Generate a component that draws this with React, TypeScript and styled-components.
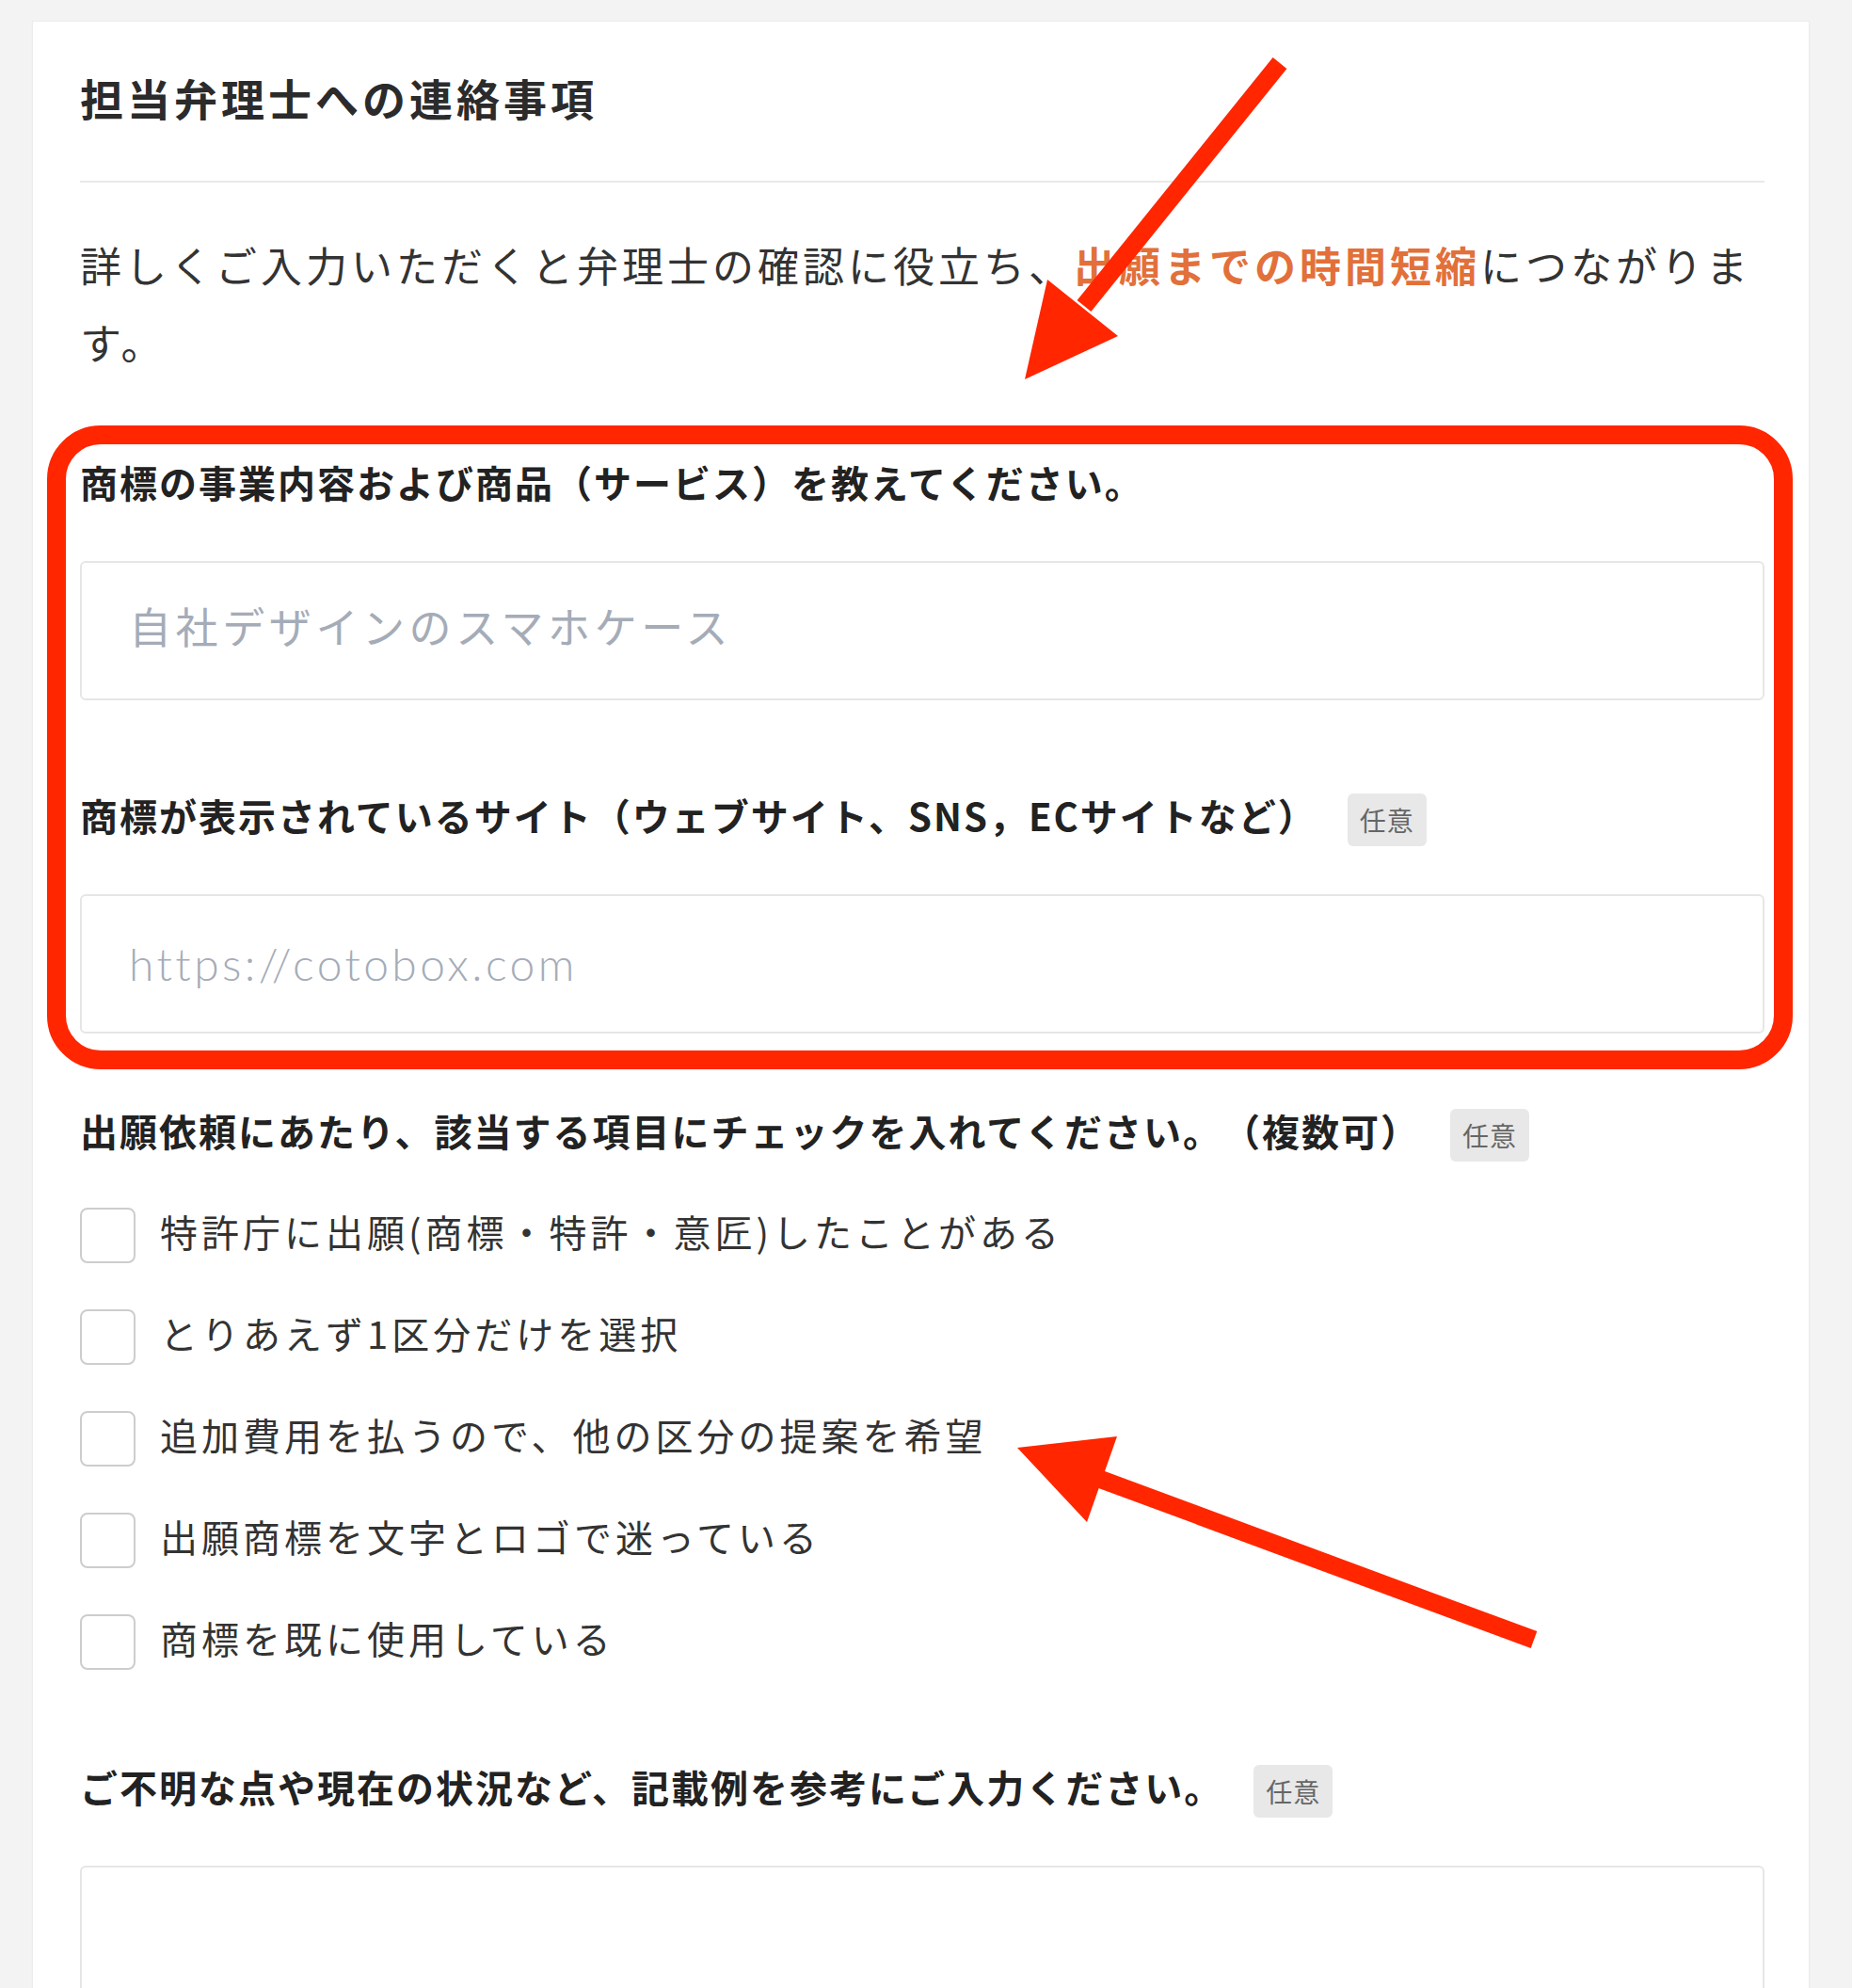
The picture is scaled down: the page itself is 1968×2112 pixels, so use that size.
import React from "react";
import styled, { createGlobalStyle } from "styled-components";

const GlobalStyle = createGlobalStyle`
  html, body {
    margin: 0;
    padding: 0;
    background: #f3f3f3;
    font-family: "Noto Sans CJK JP", "Noto Sans", sans-serif;
    color: #333;
    text-spacing-trim: space-all;
  }
  * {
    box-sizing: border-box;
  }
`;

const Page = styled.div`
  position: relative;
  width: 1968px;
  min-height: 2112px;
  padding: 23px 46px 0 35px;
  overflow: hidden;
`;

const Card = styled.section`
  background: #fff;
  box-shadow: 0 0 0 1px #ececec, 0 1px 3px rgba(0, 0, 0, 0.05);
  padding: 47px 47px 80px 50px;
`;

const Header = styled.header`
  padding-bottom: 52px;
  border-bottom: 2px solid #e9e9e9;
`;

const Title = styled.h1`
  margin: 0;
  font-size: 46px;
  line-height: 66px;
  font-weight: 700;
  letter-spacing: 4px;
  color: #2b2b2b;
  padding-bottom: 4px;
`;

const Lead = styled.p`
  margin: 46px 0 0;
  font-size: 44px;
  line-height: 82px;
  letter-spacing: 4px;
  color: #333;
`;

const Emphasis = styled.strong`
  color: #e2703a;
  font-weight: 700;
`;

const Field = styled.div<{ $top: number }>`
  margin-top: ${(p) => p.$top}px;
`;

const LabelRow = styled.div<{ $bottom?: number }>`
  display: flex;
  align-items: center;
  height: 60px;
  margin-bottom: ${(p) => p.$bottom ?? 54}px;
`;

const Label = styled.label`
  font-size: 40px;
  line-height: 60px;
  font-weight: 700;
  letter-spacing: 2px;
  color: #222;
  white-space: nowrap;
`;

const OptionalBadge = styled.span`
  margin: 10px 0 0 32px;
  height: 56px;
  padding: 0 13px;
  border-radius: 6px;
  background: #e8e8e8;
  color: #666;
  font-size: 28px;
  line-height: 56px;
  letter-spacing: 1px;
`;

const TextInput = styled.input<{ $latin?: boolean }>`
  display: block;
  width: 100%;
  height: 148px;
  padding: 0 0 ${(p) => (p.$latin ? 2 : 12)}px ${(p) => (p.$latin ? 50 : 50)}px;
  border: 2px solid #e6e6e6;
  border-radius: 6px;
  background: #fff;
  outline: none;
  font-family: ${(p) =>
    p.$latin ? `"Lato", "Noto Sans CJK JP", sans-serif` : `"Noto Sans CJK JP", sans-serif`};
  font-weight: ${(p) => (p.$latin ? 300 : 400)};
  font-size: ${(p) => (p.$latin ? 48 : 45)}px;
  letter-spacing: ${(p) => (p.$latin ? 3.4 : 4.6)}px;
  color: #333;

  &::placeholder {
    color: #a5acb8;
    opacity: 1;
  }
`;

const TextArea = styled.textarea`
  display: block;
  width: 100%;
  height: 300px;
  border: 2px solid #e6e6e6;
  border-radius: 6px;
  background: #fff;
  resize: none;
  outline: none;
`;

const CheckList = styled.ul`
  list-style: none;
  margin: 52px 0 0;
  padding: 0;
  display: flex;
  flex-direction: column;
  gap: 49px;
`;

const CheckRow = styled.li`
  display: flex;
  align-items: center;
  height: 59px;
  gap: 26px;
`;

const CheckBox = styled.span`
  flex: 0 0 59px;
  width: 59px;
  height: 59px;
  border: 2px solid #cdcdcd;
  border-radius: 8px;
  background: #fff;
`;

const CheckText = styled.span`
  font-size: 40px;
  line-height: 59px;
  letter-spacing: 4px;
  color: #333;
  white-space: nowrap;
  padding-bottom: 8px;
`;

const Annotations = styled.svg`
  position: absolute;
  left: 0;
  top: 0;
  width: 1968px;
  height: 2112px;
  pointer-events: none;
`;

const RED = "#ff2600";

const options = [
  "特許庁に出願(商標・特許・意匠)したことがある",
  "とりあえず1区分だけを選択",
  "追加費用を払うので、他の区分の提案を希望",
  "出願商標を文字とロゴで迷っている",
  "商標を既に使用している",
];

export default function App() {
  return (
    <Page>
      <GlobalStyle />
      <Card>
        <Header>
          <Title>担当弁理士への連絡事項</Title>
        </Header>

        <Lead>
          詳しくご入力いただくと弁理士の確認に役立ち、
          <Emphasis>出願までの時間短縮</Emphasis>につながります。
        </Lead>

        <Field $top={78}>
          <LabelRow>
            <Label>商標の事業内容および商品（サービス）を教えてください。</Label>
          </LabelRow>
          <TextInput placeholder="自社デザインのスマホケース" />
        </Field>

        <Field $top={92}>
          <LabelRow>
            <Label>商標が表示されているサイト（ウェブサイト、SNS，ECサイトなど）</Label>
            <OptionalBadge>任意</OptionalBadge>
          </LabelRow>
          <TextInput $latin placeholder="https://cotobox.com" />
        </Field>

        <Field $top={73}>
          <LabelRow $bottom={0}>
            <Label>出願依頼にあたり、該当する項目にチェックを入れてください。（複数可）</Label>
            <OptionalBadge>任意</OptionalBadge>
          </LabelRow>
          <CheckList>
            {options.map((o) => (
              <CheckRow key={o}>
                <CheckBox />
                <CheckText>{o}</CheckText>
              </CheckRow>
            ))}
          </CheckList>
        </Field>

        <Field $top={94}>
          <LabelRow>
            <Label>ご不明な点や現在の状況など、記載例を参考にご入力ください。</Label>
            <OptionalBadge>任意</OptionalBadge>
          </LabelRow>
          <TextArea />
        </Field>
      </Card>

      <Annotations viewBox="0 0 1968 2112">
        <rect x="60" y="462" width="1835" height="664" rx="47" fill="none" stroke={RED} strokeWidth="20" />
        <line x1="1360" y1="67" x2="1152" y2="325" stroke={RED} strokeWidth="19" />
        <polygon points="1089,403 1113,297 1188,357" fill={RED} />
        <line x1="1630" y1="1742" x2="1168" y2="1571" stroke={RED} strokeWidth="19" />
        <polygon points="1081,1538 1187,1526 1155,1617" fill={RED} />
      </Annotations>
    </Page>
  );
}
